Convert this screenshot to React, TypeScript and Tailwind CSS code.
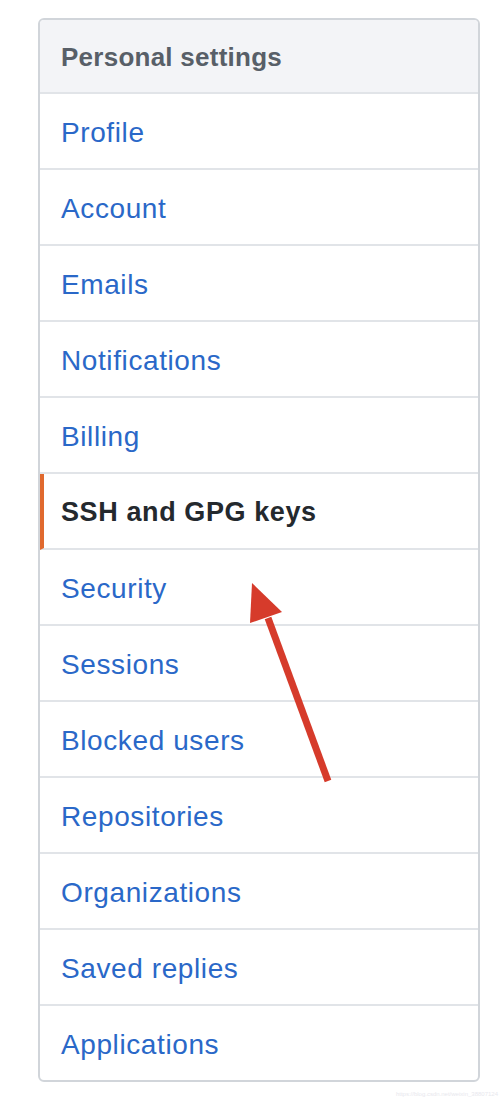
const items = [
  "Profile",
  "Account",
  "Emails",
  "Notifications",
  "Billing",
  "SSH and GPG keys",
  "Security",
  "Sessions",
  "Blocked users",
  "Repositories",
  "Organizations",
  "Saved replies",
  "Applications",
];

export default function App() {
  return (
    <div className="relative min-h-[1102px] w-[504px] bg-white pt-[18px] pl-[38px] font-['Liberation_Sans',Arial,sans-serif]">
      <nav className="w-[442px] overflow-hidden rounded-[6px] border-2 border-[#d1d5da]">
        <div className="flex h-[74px] items-center border-b-2 border-[#e1e4e8] bg-[#f3f4f7] pl-[21px] pt-[3px] text-[26px] font-bold tracking-[0.25px] text-[#585f68]">
          Personal settings
        </div>
        {items.map((item, i) => {
          const active = item === "SSH and GPG keys";
          const last = i === items.length - 1;
          return (
            <div
              key={item}
              className={`flex items-center pt-[3px] ${last ? "h-[74px]" : "h-[76px] border-b-2 border-[#e1e4e8]"} ${
                active
                  ? "border-l-4 border-l-[#e0692e] pl-[17px] text-[27px] font-bold tracking-[0.6px] text-[#24292e]"
                  : "pl-[21px] text-[28px] tracking-[0.6px] text-[#2a68c8]"
              }`}
            >
              {item}
            </div>
          );
        })}
      </nav>

      {/* red annotation arrow */}
      <svg className="absolute left-0 top-0" width="504" height="1102">
        <line x1="328" y1="781" x2="268" y2="618" stroke="#d63b2b" strokeWidth="7" />
        <polygon points="252,583 250,623 282,612" fill="#d63b2b" />
      </svg>

      <div className="absolute right-[6px] top-[1090px] text-[6px] text-[#e8e8ee]">
        https://blog.csdn.net/weixin_38807124
      </div>
    </div>
  );
}
